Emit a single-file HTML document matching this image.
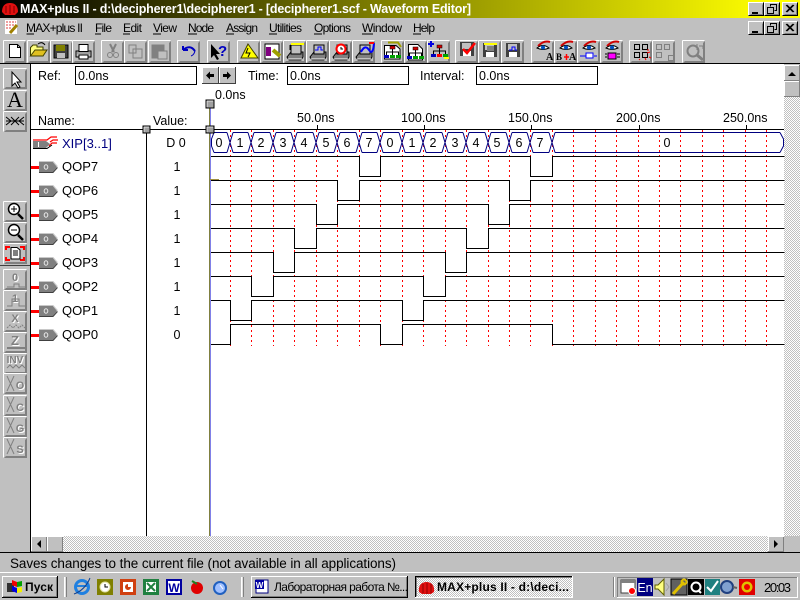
<!DOCTYPE html>
<html><head><meta charset="utf-8"><title>MAX+plus II</title>
<style>html,body{margin:0;padding:0;background:#c0c0c0;overflow:hidden}svg{display:block;font-family:"Liberation Sans",sans-serif}</style></head>
<body>
<svg xmlns="http://www.w3.org/2000/svg" width="800" height="600" viewBox="0 0 800 600">
<defs>
<linearGradient id="tg" x1="0" x2="770" y1="0" y2="0" gradientUnits="userSpaceOnUse"><stop offset="0" stop-color="#000"/><stop offset="1" stop-color="#ff0"/></linearGradient>
<g id="tb" shape-rendering="crispEdges"><rect width="23" height="23" fill="#c0c0c0"/><path d="M0 0H22M0 0V22" stroke="#fff" fill="none" transform="translate(.5 .5)"/><path d="M22 1V22H1M21 2V21H2" stroke="#808080" fill="none" transform="translate(.5 .5)"/></g>
<g id="pb" shape-rendering="crispEdges"><rect width="24" height="21" fill="#c0c0c0"/><path d="M0 0H23M0 0V20" stroke="#fff" fill="none" transform="translate(.5 .5)"/><path d="M23 1V20H1M22 2V19H2" stroke="#808080" fill="none" transform="translate(.5 .5)"/></g>
<g id="wb" shape-rendering="crispEdges"><rect width="16" height="14" fill="#c0c0c0"/><path d="M0 13V0H15" stroke="#fff" fill="none" transform="translate(.5 .5)"/><path d="M15 0V13H0" stroke="#000" fill="none" transform="translate(.5 .5)"/><path d="M14 2V12H2" stroke="#808080" fill="none" transform="translate(.5 .5)"/></g>
<g id="wmin"><use href="#wb"/><rect x="4" y="10" width="6" height="2" fill="#000"/></g>
<g id="wres"><use href="#wb"/><path d="M6.5 4.5V2.5H12.5V8.5H10.5M3.5 5.5H9.5V11.5H3.5Z" fill="none" stroke="#000" shape-rendering="crispEdges"/><path d="M6 2.5H13M3 5.5H10" stroke="#000" shape-rendering="crispEdges"/></g>
<g id="wcl"><use href="#wb"/><path d="M4 3L11 10M5 3L12 10M11 3L4 10M12 3L5 10" stroke="#000" fill="none"/></g>
<g id="sig"><rect x="0" y="-1" width="8" height="3" fill="#f00"/><path d="M8 -5H22L26 0L22 5H8Z" fill="#808080"/><path d="M8 -5.500H22L26.500 -.5" fill="none" stroke="#c8c8c8"/><path d="M26.500 .5L22 5.500H8" fill="none" stroke="#404040"/><ellipse cx="15" cy="0" rx="1.800" ry="2.200" fill="none" stroke="#e8e8e8"/></g>
<g id="eye"><path d="M4 6Q10 0 16 2" fill="none" stroke="#d00000" stroke-width="2"/><path d="M3 8Q9 3 15 8Q9 11 3 8Z" fill="#fff" stroke="#000"/><circle cx="9" cy="7.5" r="2" fill="#0050c0"/></g>
<g id="disk"><rect x="5" y="6" width="14" height="14" fill="#404040"/><rect x="7" y="7" width="9" height="6" fill="#c0c0c0"/><rect x="8" y="15" width="8" height="5" fill="#fff"/></g>
<g id="mach"><path d="M3 17L7 12H19V17L17 20H5Z" fill="#808080" stroke="#000"/><rect x="7" y="5" width="10" height="9" fill="#c0c0c0" stroke="#000"/><path d="M4 19H18" stroke="#fff"/></g>
<g id="hier"><rect x="9" y="6" width="5" height="3" fill="#d00000" stroke="#000" stroke-width=".5"/><path d="M11.500 9V12M5.500 15V12H17.500V15M11.500 12V15" stroke="#000" fill="none"/><rect x="3" y="15" width="5" height="3" fill="#0000c0"/><rect x="9" y="15" width="5" height="3" fill="#00a000"/><rect x="15" y="15" width="5" height="3" fill="#00a000"/></g>
</defs>

<rect width="800" height="600" fill="#c0c0c0"/>
<!-- title bar -->
<rect width="800" height="18" fill="url(#tg)"/>
<path d="M2 12C2 5 6 3 10 3C14 3 18 5 18 12L15 15H5Z" fill="#e01010"/><path d="M6 6V13M10 5V14M14 6V13" stroke="#800000"/>
<text x="20" y="13" font-size="12.500" font-weight="bold" fill="#fff" textLength="451" lengthAdjust="spacing">MAX+plus II - d:\decipherer1\decipherer1 - [decipherer1.scf - Waveform Editor]</text>
<use href="#wmin" x="748" y="2"/><use href="#wres" x="764" y="2"/><use href="#wcl" x="782" y="2"/>
<!-- menu -->
<rect x="5" y="20" width="12" height="14" fill="#fff"/><path d="M6 22H16M6 25H16M6 28H12" stroke="#e04040" stroke-dasharray="2 1"/><path d="M10 33L17 25" stroke="#a08000" stroke-width="3"/>
<g font-size="12" fill="#000">
<text x="26" y="32" textLength="57">MAX+plus II</text>
<text x="95" y="32" textLength="17">File</text>
<text x="123" y="32" textLength="19">Edit</text>
<text x="153" y="32" textLength="24">View</text>
<text x="188" y="32" textLength="26">Node</text>
<text x="226" y="32" textLength="32">Assign</text>
<text x="269" y="32" textLength="33">Utilities</text>
<text x="314" y="32" textLength="37">Options</text>
<text x="362" y="32" textLength="40">Window</text>
<text x="413" y="32" textLength="22">Help</text>
</g>
<path d="M26.500 34H34M95 34H101M123 34H130M153 34H161M188 34H197M226 34H234M269 34H277M314 34H322M362 34H373M413 34H421" stroke="#000" shape-rendering="crispEdges"/>
<use href="#wmin" x="748" y="21"/><use href="#wres" x="764" y="21"/><use href="#wcl" x="782" y="21"/>
<!-- toolbar -->
<use href="#tb" x="3" y="40"/><use href="#tb" x="27" y="40"/><use href="#tb" x="50" y="40"/><use href="#tb" x="72" y="40"/>
<use href="#tb" x="101" y="40"/><use href="#tb" x="124" y="40"/><use href="#tb" x="148" y="40"/>
<use href="#tb" x="177" y="40"/><use href="#tb" x="207" y="40"/>
<use href="#tb" x="237" y="40"/><use href="#tb" x="260" y="40"/><use href="#tb" x="283" y="40"/><use href="#tb" x="306" y="40"/><use href="#tb" x="329" y="40"/><use href="#tb" x="352" y="40"/>
<use href="#tb" x="381" y="40"/><use href="#tb" x="404" y="40"/><use href="#tb" x="427" y="40"/>
<use href="#tb" x="455" y="40"/><use href="#tb" x="478" y="40"/><use href="#tb" x="501" y="40"/>
<use href="#tb" x="531" y="40"/><use href="#tb" x="554" y="40"/><use href="#tb" x="577" y="40"/><use href="#tb" x="600" y="40"/>
<use href="#tb" x="629" y="40"/><use href="#tb" x="652" y="40"/><use href="#tb" x="682" y="40"/>

<path d="M9.500 44.500H17.500L20.500 47.500V57.500H9.500Z" fill="#fff" stroke="#000"/><path d="M17.500 44.500V47.500H20.500" fill="none" stroke="#000"/>
<path d="M30.500 47.500L33 45H37V47H43V56H30.500Z" fill="#ffff80" stroke="#404000"/><path d="M30.500 56L35 50H47L43 56Z" fill="#e0c020" stroke="#404000"/><path d="M38 44Q42 41 45 45" fill="none" stroke="#000"/>
<rect x="54" y="45" width="14" height="13" fill="#404040" stroke="#000"/><rect x="56" y="45" width="9" height="6" fill="#808000"/><rect x="57" y="53" width="8" height="5" fill="#c0c0c0"/>
<path d="M76 51H91V57H76Z" fill="#c0c0c0" stroke="#000"/><rect x="79" y="44.500" width="9" height="7" fill="#fff" stroke="#000"/><rect x="79" y="55" width="9" height="4" fill="#fff" stroke="#000"/><path d="M77 53H90" stroke="#808080"/>
<g fill="none" stroke="#808080"><path d="M110 44L114 52M116 44L112 52" stroke-width="2"/><circle cx="110" cy="55" r="2.500"/><circle cx="116" cy="55" r="2.500"/></g>
<g fill="#c0c0c0" stroke="#808080"><path d="M129 45H136V53H129ZM133 49H142V58H133Z"/><rect x="152" y="45" width="12" height="13" fill="#808080"/><rect x="158" y="51" width="9" height="8" fill="#c0c0c0"/></g>
<path d="M183 50Q190 44 195 51M183 50V46M183 50H188" fill="none" stroke="#0000c0" stroke-width="2"/><path d="M195 51Q194 55 191 56" fill="none" stroke="#0000c0"/>
<path d="M211 44V58L214 55L217 60L219 59L216 54H220Z" fill="#000"/><text x="218" y="56" font-size="15" font-weight="bold" fill="#0000c0">?</text>
<path d="M248 44L258 58H241Z" fill="#ff0" stroke="#404000"/><path d="M248 48L246 53H250L248 57" stroke="#000" fill="none"/>
<rect x="265" y="44" width="14" height="15" fill="#fff" stroke="#000"/><rect x="266" y="47" width="5" height="9" fill="#800080"/><path d="M273 50L280 56" stroke="#a0a000" stroke-width="4"/>
<use href="#mach" x="284" y="40"/><rect x="291" y="43" width="13" height="2" fill="#ff0"/><path d="M290 45V50" stroke="#000"/>
<use href="#mach" x="307" y="40"/><path d="M315 50H318V47H321V50H323" fill="none" stroke="#0000ff"/>
<use href="#mach" x="330" y="40"/><circle cx="341" cy="49" r="4.500" fill="#fff" stroke="#f00" stroke-width="2"/><path d="M341 47V49H343" stroke="#000" fill="none"/>
<use href="#mach" x="353" y="40"/><path d="M361 52Q365 44 369 50T374 43" fill="none" stroke="#0000ff" stroke-width="2"/><path d="M369 43H374" stroke="#f00" stroke-width="2"/>
<path d="M384.500 45.500H396L400 49V59H384.500Z" fill="#fff" stroke="#000"/><path d="M388 42.500H398L401 47" fill="none" stroke="#a0a000" stroke-width="2"/><use href="#hier" x="381" y="40"/>
<path d="M408.500 44.500H418L422.500 49V60H408.500Z" fill="#fff" stroke="#000"/><use href="#hier" x="404" y="41"/>
<use href="#hier" x="428" y="39"/><path d="M428 44H434M431 41V47" stroke="#0000e0" stroke-width="2"/><rect x="437" y="54" width="5" height="3" fill="#f00"/><rect x="444" y="57" width="5" height="2" fill="#ff0"/>
<use href="#disk" x="455" y="36"/><path d="M463 49L467 53L475 43" fill="none" stroke="#f00" stroke-width="2.500"/>
<use href="#disk" x="478" y="37"/><rect x="484" y="43" width="13" height="2" fill="#ff0"/><rect x="487" y="46" width="7" height="5" fill="#808080"/>
<use href="#disk" x="501" y="37"/><path d="M509 50H512V47H515V50H517" fill="none" stroke="#0000ff"/>
<use href="#eye" x="534" y="40"/><text x="546" y="60" font-size="10" font-weight="bold" font-family="Liberation Serif,serif">A</text>
<use href="#eye" x="557" y="40"/><text x="556" y="60" font-size="9" font-weight="bold" font-family="Liberation Serif,serif" textLength="7">B</text><path d="M564 57H569M566.500 54V60" stroke="#f00" stroke-width="1.500"/><text x="569" y="60" font-size="10" font-weight="bold" font-family="Liberation Serif,serif">A</text>
<use href="#eye" x="580" y="40"/><path d="M580 56H590M594 56H597" stroke="#0000ff"/><rect x="586" y="53" width="7" height="5" fill="#fff" stroke="#0000ff"/>
<use href="#eye" x="603" y="40"/><rect x="608" y="53" width="8" height="6" fill="#ff00ff" stroke="#000"/><path d="M605 54H607M605 57H607M617 54H620M617 57H620" stroke="#000"/>
<g fill="none" stroke="#000" shape-rendering="crispEdges"><rect x="634.500" y="44.500" width="5" height="5"/><rect x="642.500" y="44.500" width="5" height="5"/><rect x="634.500" y="52.500" width="5" height="5"/><rect x="642.500" y="52.500" width="5" height="5"/></g><path d="M649 50H647M647 53L650 52M645 58L646 60M639 59L640 60M649 57L651 58" stroke="#f00"/>
<g fill="none" stroke="#808080" shape-rendering="crispEdges"><rect x="656.500" y="44.500" width="5" height="5"/><rect x="664.500" y="44.500" width="5" height="5"/><rect x="656.500" y="52.500" width="5" height="5"/><rect x="668.500" y="55.500" width="5" height="5"/></g>
<circle cx="693" cy="51" r="5.500" fill="none" stroke="#808080" stroke-width="2"/><path d="M697 55L703 60" stroke="#808080" stroke-width="3"/><path d="M699 46H703V49M697 44V50" fill="none" stroke="#808080"/>

<!-- main frame -->
<rect x="31" y="64" width="753" height="472" fill="#fff"/>
<rect x="0" y="63" width="800" height="1" fill="#000"/>
<rect x="30" y="63" width="1" height="490" fill="#000"/>
<!-- Ref fields -->
<g font-size="12.500" fill="#000">
<text x="38" y="80">Ref:</text><text x="248" y="80">Time:</text><text x="420" y="80">Interval:</text>
<text x="78" y="80">0.0ns</text><text x="290" y="80">0.0ns</text><text x="479" y="80">0.0ns</text>
</g>
<g fill="none" stroke="#000" shape-rendering="crispEdges"><rect x="75.500" y="66.500" width="121" height="18"/><rect x="287.500" y="66.500" width="121" height="18"/><rect x="476.500" y="66.500" width="121" height="18"/></g>
<rect x="202" y="67" width="17" height="17" fill="#c0c0c0"/><rect x="219" y="67" width="17" height="17" fill="#c0c0c0"/>
<path d="M202.500 84V67.500H218.500M219.500 84V67.500H235.500" fill="none" stroke="#fff" shape-rendering="crispEdges"/><path d="M218.500 67V83.500H202M235.500 67V83.500H219" fill="none" stroke="#404040" shape-rendering="crispEdges"/>
<path d="M206 75.500L210 71.500V74H214V77H210V79.500Z" fill="#000"/><path d="M231 75.500L227 71.500V74H223V77H227V79.500Z" fill="#000"/>
<!-- header texts -->
<g font-size="12.500" fill="#000">
<text x="215" y="99">0.0ns</text>
<text x="38" y="125">Name:</text><text x="153" y="125">Value:</text>
<text x="297" y="122">50.0ns</text><text x="401" y="122">100.0ns</text><text x="508" y="122">150.0ns</text><text x="616" y="122">200.0ns</text><text x="723" y="122">250.0ns</text>
</g>
<g shape-rendering="crispEdges">
<path d="M317.500 125V129M424.500 125V129M531.500 125V129M639.500 125V129M746.500 125V129" stroke="#000"/>
<rect x="31" y="129" width="753" height="1" fill="#000"/>
<rect x="146" y="130" width="1" height="406" fill="#000"/>
<!-- dotted grid -->
<path d="M230.500 130V346M251.500 130V346M273.500 130V346M294.500 130V346M316.500 130V346M337.500 130V346M359.500 130V346M380.500 130V346M402.500 130V346M423.500 130V346M445.500 130V346M466.500 130V346M488.500 130V346M509.500 130V346M530.500 130V346M552.500 130V346M573.500 130V346M595.500 130V346M616.500 130V346M638.500 130V346M659.500 130V346M680.500 130V346M702.500 130V346M723.500 130V346M745.500 130V346M766.500 130V346" stroke="#f00" stroke-dasharray="2 3" fill="none"/>
<!-- waves -->
<g transform="translate(.5 .5)" fill="none" stroke="#000">
<path d="M210 156H359V176H380V156H530V176H552V156H784"/>
<path d="M210 180H337V200H359V180H509V200H530V180H784"/>
<path d="M210 204H316V224H337V204H488V224H509V204H784"/>
<path d="M210 228H294V248H316V228H466V248H488V228H784"/>
<path d="M210 252H273V272H294V252H445V272H466V252H784"/>
<path d="M210 276H251V296H273V276H423V296H445V276H784"/>
<path d="M210 300H230V320H251V300H402V320H423V300H784"/>
<path d="M210 344H230V324H380V344H402V324H552V344H784"/>
</g>
<!-- cursor -->
<rect x="209" y="108" width="1" height="428" fill="#808040"/><rect x="210" y="108" width="1" height="428" fill="#8080e8"/>
<rect x="210" y="179" width="9" height="1" fill="#a09040"/>
</g>
<!-- bus -->
<g fill="none" stroke="#000080">
<path d="M214 132.500H227M233 132.500H248M254 132.500H270M276 132.500H291M297 132.500H313M319 132.500H334M340 132.500H356M362 132.500H377M383 132.500H399M405 132.500H420M426 132.500H442M448 132.500H463M469 132.500H485M491 132.500H506M512 132.500H527M533 132.500H549M555 132.500H780" shape-rendering="crispEdges"/>
<path d="M214 152.500H227M233 152.500H248M254 152.500H270M276 152.500H291M297 152.500H313M319 152.500H334M340 152.500H356M362 152.500H377M383 152.500H399M405 152.500H420M426 152.500H442M448 152.500H463M469 152.500H485M491 152.500H506M512 152.500H527M533 152.500H549M555 152.500H780" shape-rendering="crispEdges"/>
<path d="M214 132.500L211.500 139V146L214 152.500M780 132.500L783.500 139V146L780 152.500"/>
<path d="M227 132.500L233 152.500M227 152.500L233 132.500M248 132.500L254 152.500M248 152.500L254 132.500M270 132.500L276 152.500M270 152.500L276 132.500M291 132.500L297 152.500M291 152.500L297 132.500M313 132.500L319 152.500M313 152.500L319 132.500M334 132.500L340 152.500M334 152.500L340 132.500M356 132.500L362 152.500M356 152.500L362 132.500M377 132.500L383 152.500M377 152.500L383 132.500M399 132.500L405 152.500M399 152.500L405 132.500M420 132.500L426 152.500M420 152.500L426 132.500M442 132.500L448 152.500M442 152.500L448 132.500M463 132.500L469 152.500M463 152.500L469 132.500M485 132.500L491 152.500M485 152.500L491 132.500M506 132.500L512 152.500M506 152.500L512 132.500M527 132.500L533 152.500M527 152.500L533 132.500M549 132.500L555 152.500M549 152.500L555 132.500"/>
</g>
<g font-size="12.500" fill="#000" text-anchor="middle">
<text x="219" y="147">0</text><text x="240" y="147">1</text><text x="261" y="147">2</text><text x="283" y="147">3</text><text x="304" y="147">4</text><text x="326" y="147">5</text><text x="347" y="147">6</text><text x="369" y="147">7</text><text x="390" y="147">0</text><text x="412" y="147">1</text><text x="433" y="147">2</text><text x="455" y="147">3</text><text x="476" y="147">4</text><text x="497" y="147">5</text><text x="519" y="147">6</text><text x="540" y="147">7</text><text x="667" y="147">0</text>
</g>
<!-- handles -->
<g shape-rendering="crispEdges">
<rect x="206" y="100" width="8" height="8" fill="#a0a0a0" stroke="#000"/><path d="M207 101H213M207 101V107" stroke="#e0e0e0"/>
<rect x="206" y="126" width="8" height="7" fill="#a0a0a0" stroke="#000"/><path d="M207 127H213M207 127V132" stroke="#e0e0e0"/>
<rect x="143" y="126" width="7" height="7" fill="#a0a0a0" stroke="#000"/><path d="M144 127H149M144 127V132" stroke="#e0e0e0"/>
</g>
<!-- names -->
<path d="M33 141H46L50 144L46 148H33Z" fill="#808080"/><path d="M33 140H47L51 137H57M50 142L53 140H58M49 146L52 143H57" fill="none" stroke="#f00" stroke-width="1.200"/><path d="M33 148.500H47L52 145" stroke="#000" fill="none"/><path d="M38.500 142V147" stroke="#fff"/>
<use href="#sig" x="31" y="167"/><use href="#sig" x="31" y="191"/><use href="#sig" x="31" y="215"/><use href="#sig" x="31" y="239"/><use href="#sig" x="31" y="263"/><use href="#sig" x="31" y="287"/><use href="#sig" x="31" y="311"/><use href="#sig" x="31" y="335"/>
<g font-size="13" fill="#000">
<text x="62" y="148" fill="#000080">XIP[3..1]</text>
<text x="62" y="171">QOP7</text><text x="62" y="195">QOP6</text><text x="62" y="219">QOP5</text><text x="62" y="243">QOP4</text><text x="62" y="267">QOP3</text><text x="62" y="291">QOP2</text><text x="62" y="315">QOP1</text><text x="62" y="339">QOP0</text>
</g>
<g font-size="12.500" fill="#000" text-anchor="middle">
<text x="176" y="147">D 0</text><text x="177" y="171">1</text><text x="177" y="195">1</text><text x="177" y="219">1</text><text x="177" y="243">1</text><text x="177" y="267">1</text><text x="177" y="291">1</text><text x="177" y="315">1</text><text x="177" y="339">0</text>
</g>
<!-- left palette -->
<use href="#pb" x="3" y="68"/><use href="#pb" x="3" y="90"/><use href="#pb" x="3" y="111"/>
<path d="M12 72V86L15 83L18 88L20 87L17 82H21Z" fill="#fff" stroke="#000"/>
<text x="15" y="107" font-size="22" font-family="Liberation Serif,serif" text-anchor="middle">A</text>
<path d="M6 117L11 121L6 125M24 117L19 121L24 125M6 121H24M11 117L19 125M19 117L11 125" fill="none" stroke="#000"/>
<use href="#pb" x="3" y="201"/><use href="#pb" x="3" y="222"/><use href="#pb" x="3" y="243"/>
<circle cx="14" cy="209" r="5.500" fill="#fff" stroke="#000" stroke-width="1.500"/><path d="M11 209H17M14 206V212" stroke="#000"/><path d="M18 214L23 219" stroke="#000" stroke-width="2.500"/>
<circle cx="14" cy="230" r="5.500" fill="#fff" stroke="#000" stroke-width="1.500"/><path d="M11 230H17" stroke="#000"/><path d="M18 235L23 240" stroke="#000" stroke-width="2.500"/>
<path d="M6 250V247H10M20 247H24V250M6 257V260H10M20 260H24V257" fill="none" stroke="#f00" stroke-width="2"/><path d="M11 247.500H17L20 250V259H11Z" fill="#fff" stroke="#000"/><path d="M13 251H18M13 253H18M13 255H18" stroke="#000"/>
<rect x="0" y="265" width="30" height="1" fill="#404040"/>
<use href="#pb" x="3" y="269"/><use href="#pb" x="3" y="290"/><use href="#pb" x="3" y="311"/><use href="#pb" x="3" y="332"/><use href="#pb" x="3" y="353"/><use href="#pb" x="3" y="373"/><use href="#pb" x="3" y="395"/><use href="#pb" x="3" y="416"/><use href="#pb" x="3" y="437"/>
<g font-weight="bold" fill="#fff" text-anchor="middle">
<text x="16" y="282" font-size="11">0</text><text x="16" y="303" font-size="11">1</text><text x="16" y="323" font-size="11">X</text><text x="16" y="346" font-size="13">Z</text><text x="16" y="364" font-size="10">INV</text>
<text x="21" y="390" font-size="11">O</text><text x="21" y="412" font-size="11">C</text><text x="21" y="433" font-size="11">G</text><text x="21" y="454" font-size="11">S</text>
</g>
<g font-weight="bold" fill="#808080" text-anchor="middle">
<text x="15" y="281" font-size="11">0</text><text x="15" y="302" font-size="11">1</text><text x="15" y="322" font-size="11">X</text><text x="15" y="345" font-size="13">Z</text><text x="15" y="363" font-size="10">INV</text>
<text x="20" y="389" font-size="11">O</text><text x="20" y="411" font-size="11">C</text><text x="20" y="432" font-size="11">G</text><text x="20" y="453" font-size="11">S</text>
</g>
<g fill="none" stroke="#808080"><path d="M7 287H14V284H19V287H25M7 306H12V299H19V306H25"/><path d="M7 328L10 325L13 328L16 325L19 328L22 325L25 328" stroke-dasharray="2 1"/><path d="M7 348H25" stroke-width="2"/><path d="M7 368L10 365L13 368L16 365L19 368L22 365L25 368"/>
<path d="M7 376L14 391M14 376L7 391M7 397L14 412M14 397L7 412M7 418L14 433M14 418L7 433M7 439L14 454M14 439L7 454"/></g>
<!-- v scrollbar -->
<g shape-rendering="crispEdges" fill="none" stroke="#fff" stroke-dasharray="1 1">
<path d="M784.500 97V536M786.500 97V536M788.500 97V536M790.500 97V536M792.500 97V536M794.500 97V536M796.500 97V536M798.500 97V536"/>
<path stroke-dashoffset="1" d="M785.500 97V536M787.500 97V536M789.500 97V536M791.500 97V536M793.500 97V536M795.500 97V536M797.500 97V536M799.500 97V536"/>
</g>
<path d="M784 64.500H800" stroke="#c0c0c0" shape-rendering="crispEdges"/>
<rect x="784" y="65" width="16" height="16" fill="#c0c0c0"/><rect x="784" y="81" width="16" height="16" fill="#c0c0c0"/>
<g shape-rendering="crispEdges" fill="none" stroke="#808080"><path d="M799.500 65V80.500H784M799.500 81V96.500H784"/><path d="M784.500 80V65.500H799M784.500 96V81.500H799" stroke="#fff"/></g>
<path d="M788 76L792 72L796 76Z" fill="#000"/>
<!-- h scrollbar -->
<g shape-rendering="crispEdges" fill="none" stroke="#fff" stroke-dasharray="1 1">
<path d="M63 536.500H768M63 538.500H768M63 540.500H768M63 542.500H768M63 544.500H768M63 546.500H768M63 548.500H768M63 550.500H768"/>
<path stroke-dashoffset="1" d="M63 537.500H768M63 539.500H768M63 541.500H768M63 543.500H768M63 545.500H768M63 547.500H768M63 549.500H768M63 551.500H768"/>
</g>
<rect x="31" y="536" width="16" height="16" fill="#c0c0c0"/><rect x="47" y="536" width="16" height="16" fill="#c0c0c0"/><rect x="768" y="536" width="16" height="16" fill="#c0c0c0"/><rect x="784" y="536" width="16" height="16" fill="#c0c0c0"/>
<g shape-rendering="crispEdges" fill="none"><path d="M31.500 552V536.500H47M47.500 552V536.500H63M768.500 552V536.500H784" stroke="#fff"/><path d="M46.500 537V551.500H31M62.500 537V551.500H47M783.500 537V551.500H768" stroke="#808080"/></g>
<path d="M41 540L37 544L41 548Z" fill="#000"/><path d="M774 540L778 544L774 548Z" fill="#000"/>
<rect x="0" y="552" width="800" height="1" fill="#000"/>
<!-- status bar -->
<text x="10" y="568" font-size="13.500" fill="#000" textLength="386">Saves changes to the current file (not available in all applications)</text>
<!-- taskbar -->
<rect x="0" y="572" width="800" height="1" fill="#fff"/>
<g shape-rendering="crispEdges">
<rect x="2" y="576" width="56" height="22" fill="#c0c0c0"/><path d="M2.500 597V576.500H57" stroke="#fff" fill="none"/><path d="M57.500 576V597.500H2" stroke="#000" fill="none"/><path d="M56.500 577V596.500H3" stroke="#808080" fill="none"/>
<path d="M64.500 577V597M241.500 577V597" stroke="#fff"/><path d="M66.500 577V597M243.500 577V597" stroke="#808080"/><path d="M65.500 577V597M242.500 577V597" stroke="#dfdfdf"/>
</g>
<path d="M7 583H14V592H7Z" fill="#303030"/><path d="M12 580L17 582V587L12 585Z" fill="#f00000"/><path d="M17 582L22 581V586L17 587Z" fill="#00a000"/><path d="M12 586L17 588V593L12 591Z" fill="#0000e0"/><path d="M17 588L22 587V592L17 593Z" fill="#f0f000"/>
<text x="25" y="591" font-size="12" font-weight="bold" textLength="28">Пуск</text>
<!-- quick launch -->
<circle cx="82" cy="587" r="6.500" fill="none" stroke="#2080e0" stroke-width="3"/><path d="M75 586H89" stroke="#2080e0" stroke-width="2"/><path d="M74 594Q85 590 90 578" fill="none" stroke="#104090"/>
<rect x="97" y="579" width="16" height="16" fill="#808000"/><circle cx="105" cy="587" r="5" fill="#fff" stroke="#e0e0a0"/><path d="M105 584V587H108" stroke="#000" fill="none"/>
<rect x="120" y="579" width="16" height="16" fill="#d04010"/><rect x="123" y="582" width="10" height="10" fill="#fff"/><path d="M128 584A3 3 0 1 0 131 587H128Z" fill="#d04010"/>
<rect x="143" y="579" width="16" height="16" fill="#208040"/><rect x="146" y="582" width="10" height="10" fill="#fff"/><path d="M147 583L155 591M155 583L147 591" stroke="#208040" stroke-width="2"/>
<rect x="166" y="579" width="16" height="16" fill="#0000a0"/><rect x="168" y="581" width="12" height="12" fill="#fff"/><text x="174" y="592" font-size="12" font-weight="bold" fill="#0000a0" text-anchor="middle">W</text>
<circle cx="197" cy="588" r="6" fill="#e00000"/><path d="M192 581L197 584" stroke="#208020" stroke-width="2"/>
<circle cx="220" cy="588" r="6" fill="#a0c0ff" stroke="#2060c0" stroke-width="2"/><path d="M220 585L223 589" stroke="#fff"/>
<!-- tasks -->
<g shape-rendering="crispEdges">
<rect x="251" y="576" width="157" height="22" fill="#c0c0c0"/><path d="M251.500 597V576.500H408" stroke="#fff" fill="none"/><path d="M407.500 576V597.500H251" stroke="#000" fill="none"/><path d="M406.500 577V596.500H252" stroke="#808080" fill="none"/>
<g fill="none" stroke="#fff" stroke-dasharray="1 1">
<path d="M417 578.500H572M417 580.500H572M417 582.500H572M417 584.500H572M417 586.500H572M417 588.500H572M417 590.500H572M417 592.500H572M417 594.500H572M417 596.500H572"/>
<path stroke-dashoffset="1" d="M417 579.500H572M417 581.500H572M417 583.500H572M417 585.500H572M417 587.500H572M417 589.500H572M417 591.500H572M417 593.500H572M417 595.500H572"/>
</g>
<path d="M415.500 597V576.500H573" stroke="#000" fill="none"/><path d="M572.500 576V597.500H415" stroke="#fff" fill="none"/><path d="M416.500 596V577.500H572" stroke="#808080" fill="none"/>
</g>
<rect x="256" y="580" width="12" height="13" fill="#fff" stroke="#000080"/><rect x="255" y="580" width="9" height="9" fill="#0000a0"/><text x="259.500" y="588" font-size="8" font-weight="bold" fill="#fff" text-anchor="middle">W</text>
<text x="274" y="591" font-size="12" textLength="134" lengthAdjust="spacing">Лабораторная работа №...</text>
<path d="M419 592C418 584 423 582 426.500 582C430 582 435 584 434 592L431 594H422Z" fill="#e01010"/><path d="M423 584V593M427 583V594M431 584V593" stroke="#900000"/>
<text x="437" y="591" font-size="12" font-weight="bold" textLength="132" lengthAdjust="spacing">MAX+plus II  - d:\deci...</text>
<!-- tray -->
<g shape-rendering="crispEdges"><path d="M613.500 577V597" stroke="#808080"/><path d="M614.500 577V597" stroke="#fff"/><path d="M617.500 597V577.500H797" stroke="#808080" fill="none"/><path d="M797.500 577V597.500H617" stroke="#fff" fill="none"/></g>
<rect x="621" y="580" width="14" height="13" fill="#fff" stroke="#404040"/><rect x="621" y="580" width="14" height="3" fill="#808080"/><circle cx="632" cy="591" r="3.500" fill="#f00" stroke="#fff"/>
<rect x="637" y="578" width="16" height="18" fill="#000080"/><text x="645" y="592" font-size="12.500" fill="#fff" text-anchor="middle">En</text>
<path d="M655 585H658L664 579V595L658 589H655Z" fill="#ffff80" stroke="#606000"/><path d="M666 583L669 587L666 591" fill="none" stroke="#a0a0a0"/>
<rect x="671" y="579" width="16" height="16" fill="#606060" stroke="#000"/><path d="M673 594L684 582" stroke="#e0c000" stroke-width="3"/><circle cx="684" cy="582" r="2.500" fill="none" stroke="#e0c000" stroke-width="2"/>
<rect x="688" y="579" width="16" height="16" fill="#000"/><circle cx="696" cy="587" r="4.500" fill="none" stroke="#fff" stroke-width="2"/><path d="M698 590L701 593" stroke="#fff" stroke-width="2"/>
<rect x="705" y="579" width="15" height="16" fill="#208080"/><path d="M707 587L711 591L718 581" fill="none" stroke="#fff" stroke-width="2"/>
<circle cx="727" cy="587" r="6" fill="#80a0d0" stroke="#204080" stroke-width="2"/><path d="M733 587L737 588" stroke="#606060" stroke-width="2"/>
<rect x="739" y="579" width="16" height="16" fill="#e00000"/><circle cx="747" cy="587" r="5.500" fill="#e0c000"/><circle cx="747" cy="587" r="3" fill="#f00000"/>
<text x="764" y="592" font-size="13" textLength="27">20:03</text>
</svg>
</body></html>
